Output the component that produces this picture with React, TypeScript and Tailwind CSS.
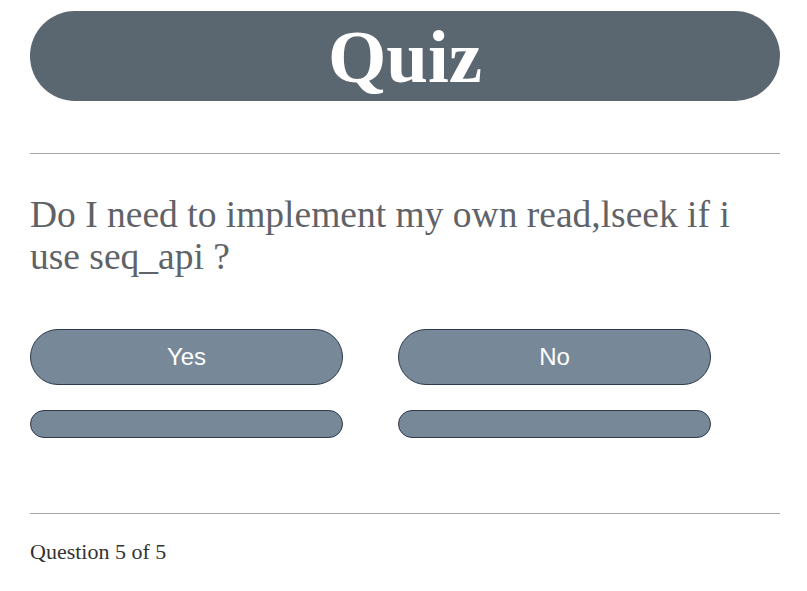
import React from "react";

export default function App() {
  const serif = { fontFamily: '"Liberation Serif", "Times New Roman", serif' };
  const sans = { fontFamily: '"Liberation Sans", Arial, sans-serif' };
  return (
    <div className="bg-white w-[807px] h-[591px] overflow-hidden" style={serif}>
      <div className="ml-[30px] w-[750px] pt-[11px]">
        <div className="h-[90px] rounded-[45px] bg-[#5a6670] flex items-center justify-center">
          <h1 className="text-white font-bold text-[75px] leading-none" style={serif}>Quiz</h1>
        </div>
        <div className="mt-[52px] h-px bg-[#a6a6a6]" />
        <p className="mt-[40px] w-[735px] text-[37.5px] leading-[42px] text-[#5f6368]">
          Do I need to implement my own read,lseek if i use seq_api ?
        </p>
        <div className="mt-[51px] grid grid-cols-[313px_313px] gap-x-[55px] gap-y-[25px]">
          <button className="h-[56px] rounded-[28px] bg-[#778899] border border-[#2f3a4a] text-white text-[24px]" style={sans}>Yes</button>
          <button className="h-[56px] rounded-[28px] bg-[#778899] border border-[#2f3a4a] text-white text-[24px]" style={sans}>No</button>
          <button className="h-[28px] rounded-[14px] bg-[#778899] border border-[#2f3a4a]" />
          <button className="h-[28px] rounded-[14px] bg-[#778899] border border-[#2f3a4a]" />
        </div>
        <div className="mt-[75px] h-px bg-[#a6a6a6]" />
        <p className="mt-[21px] text-[22px] text-[#333]">Question 5 of 5</p>
      </div>
    </div>
  );
}
